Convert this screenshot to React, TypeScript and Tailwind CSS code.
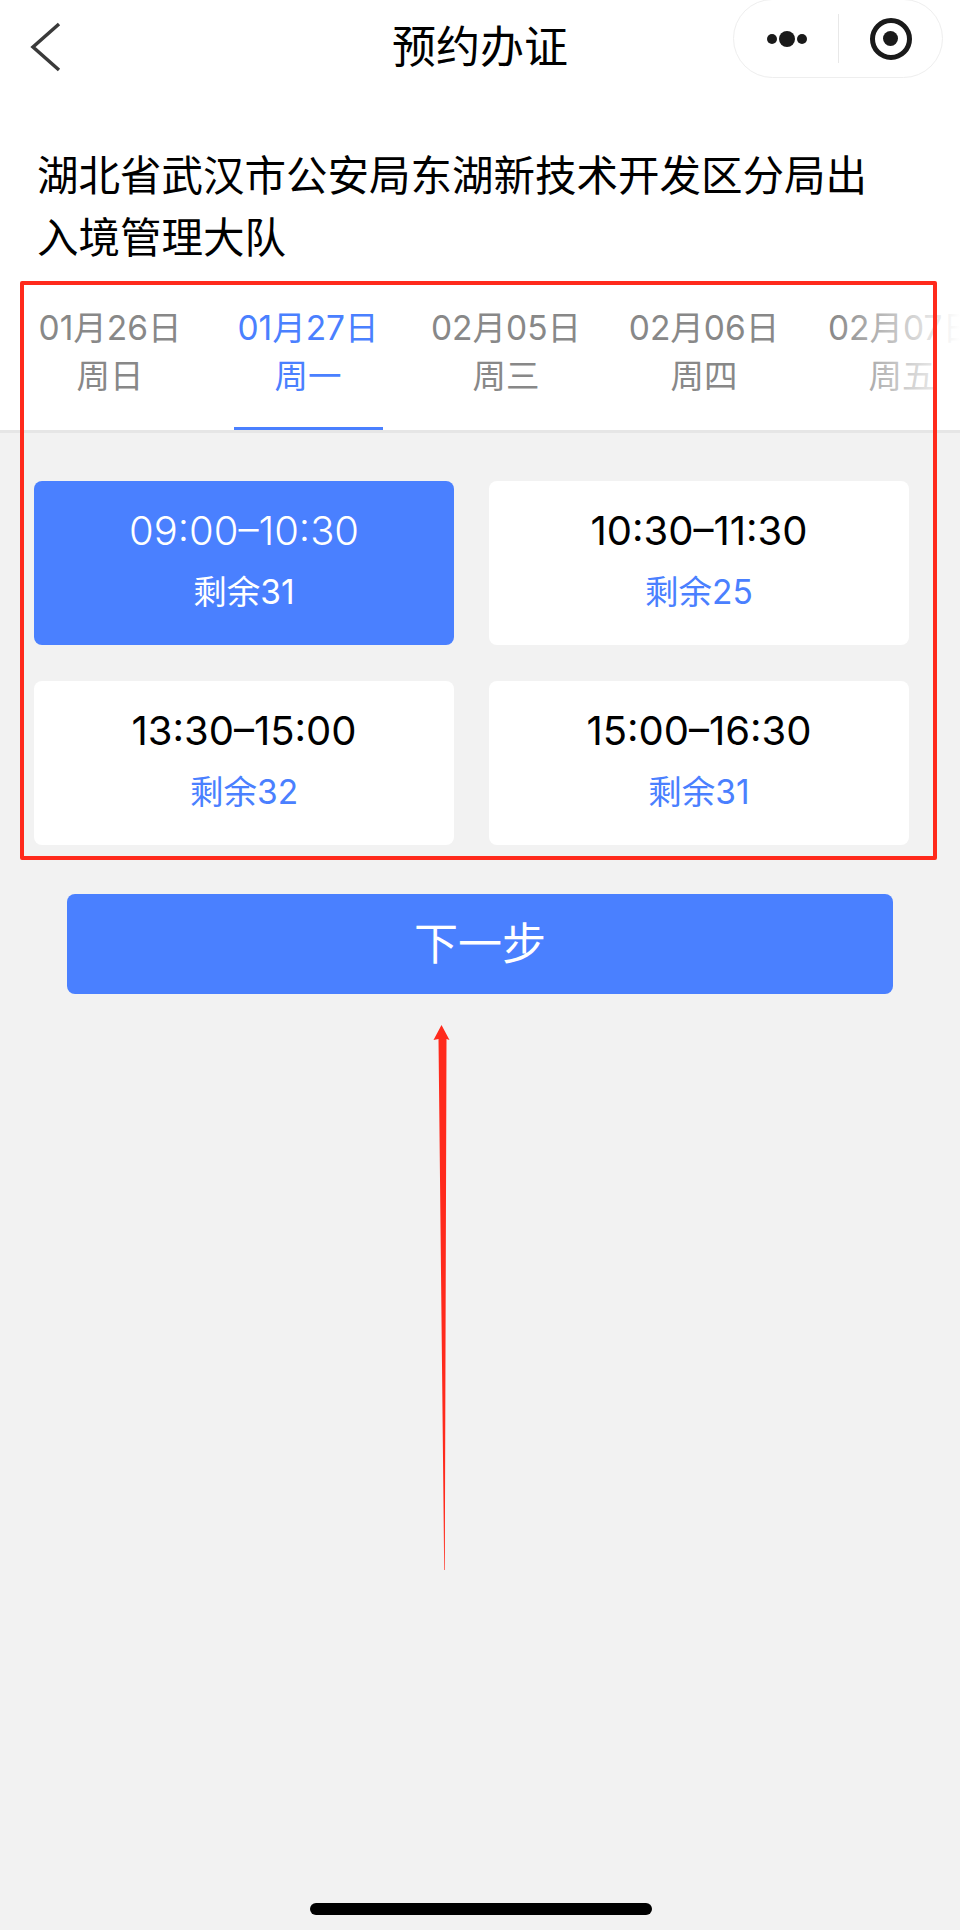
const font = `font-['Inter','Noto_Sans_CJK_SC',sans-serif]`;

const tabs = [
  { date: "01月26日", week: "周日" },
  { date: "01月27日", week: "周一", active: true },
  { date: "02月05日", week: "周三" },
  { date: "02月06日", week: "周四" },
  { date: "02月07日", week: "周五" },
];

const slots = [
  { time: "09:00–10:30", left: "剩余31", active: true },
  { time: "10:30–11:30", left: "剩余25" },
  { time: "13:30–15:00", left: "剩余32" },
  { time: "15:00–16:30", left: "剩余31" },
];

// ---------- NAV BAR ----------
function NavBar() {
  return (
    <div className="relative flex h-[94px] items-center justify-center">
      <svg className="absolute left-[28px] top-[20px]" width="36" height="54" viewBox="0 0 36 54" fill="none">
        <path d="M31 4 L5 27 L31 50" stroke="#3a3a3a" strokeWidth="3.5" />
      </svg>
      <div className="text-[44px] leading-none text-black">预约办证</div>
      {/* capsule */}
      <div className="absolute left-[733px] top-[-1px] flex h-[79px] w-[210px] items-center rounded-full border border-[#eeeeee] bg-white">
        <div className="flex w-[104px] items-center justify-center gap-[2px] pl-[2px]">
          <span className="h-[10px] w-[10px] rounded-full bg-[#1a1a1a]" />
          <span className="h-[16px] w-[16px] rounded-full bg-[#1a1a1a]" />
          <span className="h-[10px] w-[10px] rounded-full bg-[#1a1a1a]" />
        </div>
        <div className="h-[49px] w-px bg-[#e8e8e8]" />
        <div className="flex flex-1 items-center justify-center">
          <div className="flex h-[42px] w-[42px] items-center justify-center rounded-full border-[5px] border-[#1a1a1a]">
            <span className="h-[15px] w-[15px] rounded-full bg-[#1a1a1a]" />
          </div>
        </div>
      </div>
    </div>
  );
}

// ---------- DATE TABS ----------
function DateTabs() {
  return (
    <div className="relative h-[152px] overflow-hidden border-b-[3px] border-[#e6e6e6] bg-white pl-[11px]">
      <div className="flex w-[1100px]">
        {tabs.map(t => (
          <div key={t.date} className="relative flex h-[149px] w-[198px] flex-col items-center pt-[23px]">
            <div className={`text-[33.5px] leading-[48px] ${t.active ? "text-[#4a80ff]" : "text-[#888888]"}`}>{t.date}</div>
            <div className={`text-[33.5px] leading-[48px] ${t.active ? "text-[#4a80ff]" : "text-[#888888]"}`}>{t.week}</div>
            {t.active && <span className="absolute bottom-0 left-[25px] h-[3px] w-[149px] bg-[#4a80ff]" />}
          </div>
        ))}
      </div>
      <div className="absolute bottom-0 right-0 top-0 w-[130px] bg-gradient-to-r from-white/0 to-white" />
    </div>
  );
}

export default function App() {
  return (
    <div className={`relative h-[1930px] w-[960px] overflow-hidden bg-[#f2f2f2] ${font}`}>
      <div className="bg-white">
        <NavBar />
        <div className="pl-[37px] pr-[60px] pt-[51px] pb-[12px] text-[41.5px] leading-[62px] text-black">
          湖北省武汉市公安局东湖新技术开发区分局出入境管理大队
        </div>
      </div>
      <DateTabs />

      {/* time slots */}
      <div className="grid grid-cols-[420px_420px] gap-x-[35px] gap-y-[36px] pl-[34px] pt-[48px]">
        {slots.map(s => (
          <div
            key={s.time}
            className={`flex h-[164px] flex-col items-center rounded-[8px] pt-[25px] ${s.active ? "bg-[#4a80ff]" : "bg-white"}`}
          >
            <div className={`text-[40px] leading-[50px] ${s.active ? "font-light text-white" : "text-black"}`}>{s.time}</div>
            <div className={`mt-[12px] text-[33.5px] leading-[48px] ${s.active ? "text-white" : "text-[#4a80ff]"}`}>{s.left}</div>
          </div>
        ))}
      </div>

      <div className="px-[67px] pt-[49px]">
        <button className="flex h-[100px] w-[826px] items-center justify-center rounded-[8px] bg-[#4a80ff] text-[44px] text-white">
          下一步
        </button>
      </div>

      {/* annotation: red box */}
      <div className="absolute left-[20px] top-[281px] h-[579px] w-[917px] rounded-[2px] border-[4px] border-[#ff2a1c]" />
      {/* annotation: red arrow */}
      <svg className="absolute left-[420px] top-[1020px]" width="50" height="560" viewBox="0 0 50 560">
        <path d="M21.5 5 L29.5 20 L26.5 19 L24.8 550 L24.2 550 L18.5 19 L13.5 20 Z" fill="#ff2a1c" />
      </svg>

      {/* home indicator */}
      <div className="absolute left-[310px] top-[1903px] h-[12px] w-[342px] rounded-full bg-black" />
    </div>
  );
}
